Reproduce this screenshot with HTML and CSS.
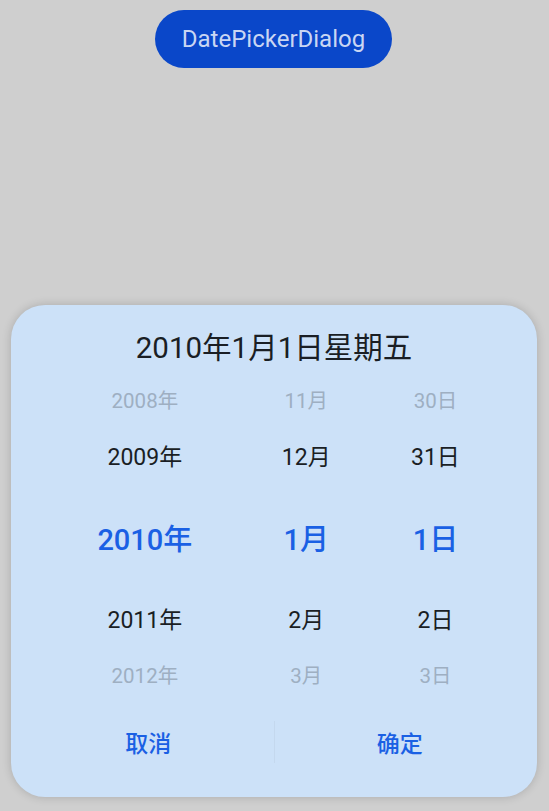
FILE: index.html
```html
<!DOCTYPE html>
<html lang="zh">
<head>
<meta charset="utf-8">
<title>DatePickerDialog</title>
<link rel="stylesheet" href="styles.css">
</head>
<body>
<div class="page">
  <div class="top">
    <button class="open-btn">DatePickerDialog</button>
  </div>
  <div class="dialog">
    <div class="title">2010年1月1日星期五</div>
    <div class="picker">
      <div class="col col-year">
        <div class="item faded">2008年</div>
        <div class="item normal">2009年</div>
        <div class="item selected">2010年</div>
        <div class="item normal">2011年</div>
        <div class="item faded">2012年</div>
      </div>
      <div class="col col-month">
        <div class="item faded">11月</div>
        <div class="item normal">12月</div>
        <div class="item selected">1月</div>
        <div class="item normal">2月</div>
        <div class="item faded">3月</div>
      </div>
      <div class="col col-day">
        <div class="item faded">30日</div>
        <div class="item normal">31日</div>
        <div class="item selected">1日</div>
        <div class="item normal">2日</div>
        <div class="item faded">3日</div>
      </div>
    </div>
    <div class="actions">
      <div class="action">取消</div>
      <div class="divider"></div>
      <div class="action">确定</div>
    </div>
  </div>
</div>
</body>
</html>
```
FILE: styles.css
```css
html, body {
  margin: 0;
  padding: 0;
  background: #cfcfcf;
  font-family: Roboto, "Noto Sans CJK SC", sans-serif;
}
.page {
  width: 549px;
  height: 811px;
  overflow: hidden;
}
.top {
  display: flex;
  justify-content: center;
  padding-top: 10px;
}
.open-btn {
  width: 237px;
  height: 58px;
  border: none;
  border-radius: 29px;
  background: #0a47c9;
  color: #c9d6f3;
  font-family: Roboto, "Noto Sans CJK SC", sans-serif;
  font-size: 24px;
  padding: 0;
  margin-left: -2px;
}
.dialog {
  margin: 237px 12px 0 11px;
  height: 492px;
  background: #cce1f8;
  border-radius: 34px;
  box-shadow: 0 0 10px rgba(0, 0, 0, 0.18);
  display: flex;
  flex-direction: column;
}
.title {
  padding-top: 14px;
  height: 52px;
  display: flex;
  align-items: center;
  justify-content: center;
  font-size: 29.5px;
  font-weight: 400;
  color: #1a1e24;
}
.picker {
  display: flex;
  padding: 0 37px;
}
.col {
  display: flex;
  flex-direction: column;
  align-items: center;
}
.col-year { flex: 3; }
.col-month { flex: 2; }
.col-day { flex: 2; }
.item {
  height: 56px;
  display: flex;
  align-items: center;
  justify-content: center;
  white-space: nowrap;
}
.item.faded {
  font-size: 20.5px;
  color: #9eafc2;
}
.item.normal {
  font-size: 23px;
  color: #1a1e24;
}
.item.selected {
  height: 107px;
  font-size: 29px;
  font-weight: 500;
  color: #1a60e4;
}
.actions {
  margin-top: 18px;
  height: 44px;
  display: flex;
  align-items: center;
  padding: 0 12px;
}
.action {
  flex: 1;
  text-align: center;
  font-size: 23px;
  font-weight: 500;
  color: #1a60e4;
}
.divider {
  width: 1px;
  height: 42px;
  background: rgba(0, 0, 0, 0.04);
}
```
